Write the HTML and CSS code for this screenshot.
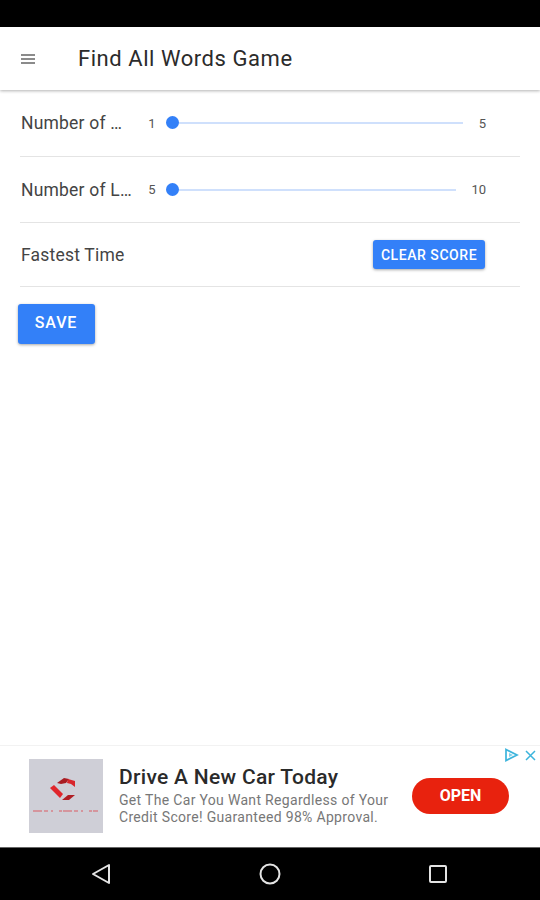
FILE: index.html
```html
<!DOCTYPE html>
<html lang="en">
<head>
  <meta charset="UTF-8">
  <meta name="viewport" content="width=device-width, initial-scale=1">
  <title>Find All Words Game</title>
  <link rel="stylesheet" href="styles.css">
</head>
<body>
  <div class="status-bar"></div>
  <header class="toolbar">
    <svg class="menu-icon" width="14" height="12" viewBox="0 0 14 12"><path d="M0 2h14M0 6h14M0 10h14" stroke="#666" stroke-width="1.3"/></svg>
    <h1>Find All Words Game</h1>
  </header>
  <main class="content">
    <div class="row row-one">
      <span class="label">Number of …</span>
      <span class="min">1</span>
      <div class="slider"><span class="thumb"></span></div>
      <span class="max max-one">5</span>
    </div>
    <div class="row row-two">
      <span class="label">Number of L…</span>
      <span class="min">5</span>
      <div class="slider"><span class="thumb"></span></div>
      <span class="max">10</span>
    </div>
    <div class="row row-three">
      <span class="label">Fastest Time</span>
      <button class="btn btn-clear">CLEAR SCORE</button>
    </div>
    <button class="btn btn-save">SAVE</button>
  </main>
  <aside class="ad">
    <div class="ad-logo">
      <svg width="74" height="74" viewBox="0 0 74 74">
        <path d="M28 24l7-5 5 1-3 4-5 1z" fill="#a81c22"/>
        <path d="M39 20l7 2 0 6-4-3-4-1z" fill="#d8262c"/>
        <path d="M21 29l4-3 9 9-3 4z" fill="#e0262c"/>
        <path d="M33 41l6-5h7l-6 5z" fill="#b01e24"/>
        <path d="M4 52h65" stroke="#d8838a" stroke-width="1.3" stroke-dasharray="9 2 4 3 2 6 3 1"/>
      </svg>
    </div>
    <div class="ad-text">
      <h2>Drive A New Car Today</h2>
      <p>Get The Car You Want Regardless of Your Credit Score! Guaranteed 98% Approval.</p>
    </div>
    <button class="ad-open">OPEN</button>
    <div class="ad-marks">
      <svg width="15" height="14" viewBox="0 0 15 14"><path d="M2 1.5l11 5.5-11 5.5z" fill="none" stroke="#3cb4dc" stroke-width="1.7"/><path d="M5 5l4 2-4 2z" fill="#7fd0ea"/></svg>
      <svg width="11" height="11" viewBox="0 0 11 11"><path d="M1 1l9 9M10 1l-9 9" stroke="#3cb4dc" stroke-width="1.5"/></svg>
    </div>
  </aside>
  <nav class="nav-bar">
    <svg width="20" height="22" viewBox="0 0 20 22"><path d="M18 2v18L2 11z" fill="none" stroke="#e4e4e4" stroke-width="2" stroke-linejoin="round"/></svg>
    <svg width="22" height="22" viewBox="0 0 22 22"><circle cx="11" cy="11" r="9.5" fill="none" stroke="#e4e4e4" stroke-width="2"/></svg>
    <svg width="20" height="20" viewBox="0 0 20 20"><rect x="2" y="2" width="16" height="16" rx="1" fill="none" stroke="#e4e4e4" stroke-width="2"/></svg>
  </nav>
</body>
</html>
```

FILE: styles.css
```css
/* page */
body { margin: 0; height: 900px; display: flex; flex-direction: column; overflow: hidden; background: #fff; color: #333; font-family: Roboto, sans-serif; }
.status-bar { height: 27px; background: #000; }

/* toolbar */
.toolbar { height: 63px; display: flex; align-items: center; background: #fff; box-shadow: 0 1px 3px rgba(0,0,0,0.3); box-sizing: border-box; padding-left: 21px; }
.menu-icon { flex: none; }
.toolbar h1 { margin: 0 0 0 43px; font-size: 22px; font-weight: 400; letter-spacing: 0.55px; color: #2b2b2b; }

/* settings rows */
.content { flex: 1; padding: 0 20px; }
.row { display: flex; align-items: center; border-bottom: 1px solid #e4e4e4; box-sizing: border-box; }
.row-one { height: 67px; }
.row-two { height: 66px; }
.row-three { height: 64px; }
.label { width: 111px; flex: none; margin-left: 1px; font-size: 17.5px; letter-spacing: 0.2px; color: #444; white-space: nowrap; }
.row-three .label { width: auto; }
.min { margin-left: 16px; width: 8px; font-size: 13px; color: #555; text-align: center; }
.max { margin-left: 15px; margin-right: 34px; font-size: 13px; color: #555; }
.max-one { margin-left: 16px; }
.slider { flex: 1; height: 2px; margin-left: 10px; background: #cfe0fc; position: relative; }
.thumb { position: absolute; left: 0; top: -6px; width: 13px; height: 13px; border-radius: 50%; background: #3380f8; }

/* buttons */
.btn { display: block; border: none; border-radius: 3px; background: #3380f8; color: #fff; font-family: Roboto, sans-serif; font-weight: 500; box-shadow: 0 1px 3px rgba(0,0,0,0.35); padding: 0; }
.btn-clear { margin-left: auto; margin-right: 35px; width: 112px; height: 29px; font-size: 14px; letter-spacing: 0.55px; }
.btn-save { margin: 17px 0 0 -2px; width: 77px; height: 40px; padding-bottom: 4px; padding-right: 1px; font-size: 16px; letter-spacing: 0.9px; }

/* ad */
.ad { height: 102px; display: flex; align-items: center; position: relative; background: #fff; border-top: 1px solid #f2f2f2; box-sizing: border-box; padding: 0 0 2px 29px; }
.ad-logo { width: 74px; height: 74px; flex: none; background: #cfcfd7; }
.ad-text { margin-left: 16px; width: 283px; flex: none; }
.ad-text h2 { margin: 0 0 3px; font-size: 21px; font-weight: 500; color: #2a2a2a; letter-spacing: 0.3px; }
.ad-text p { margin: 0; font-size: 14px; line-height: 17.5px; color: #777; letter-spacing: 0.32px; }
.ad-open { flex: none; margin-left: 10px; width: 97px; height: 36px; border: none; border-radius: 18px; background: #e8220e; color: #fff; font-family: Roboto, sans-serif; font-size: 16px; font-weight: 700; padding: 0; }
.ad-marks { position: absolute; top: 2px; right: 4px; display: flex; align-items: center; gap: 6px; }

/* android nav */
.nav-bar { height: 53px; background: #000; border-top: 1px solid #666; box-sizing: border-box; display: flex; align-items: center; padding-left: 91px; gap: 147.5px; }
```
